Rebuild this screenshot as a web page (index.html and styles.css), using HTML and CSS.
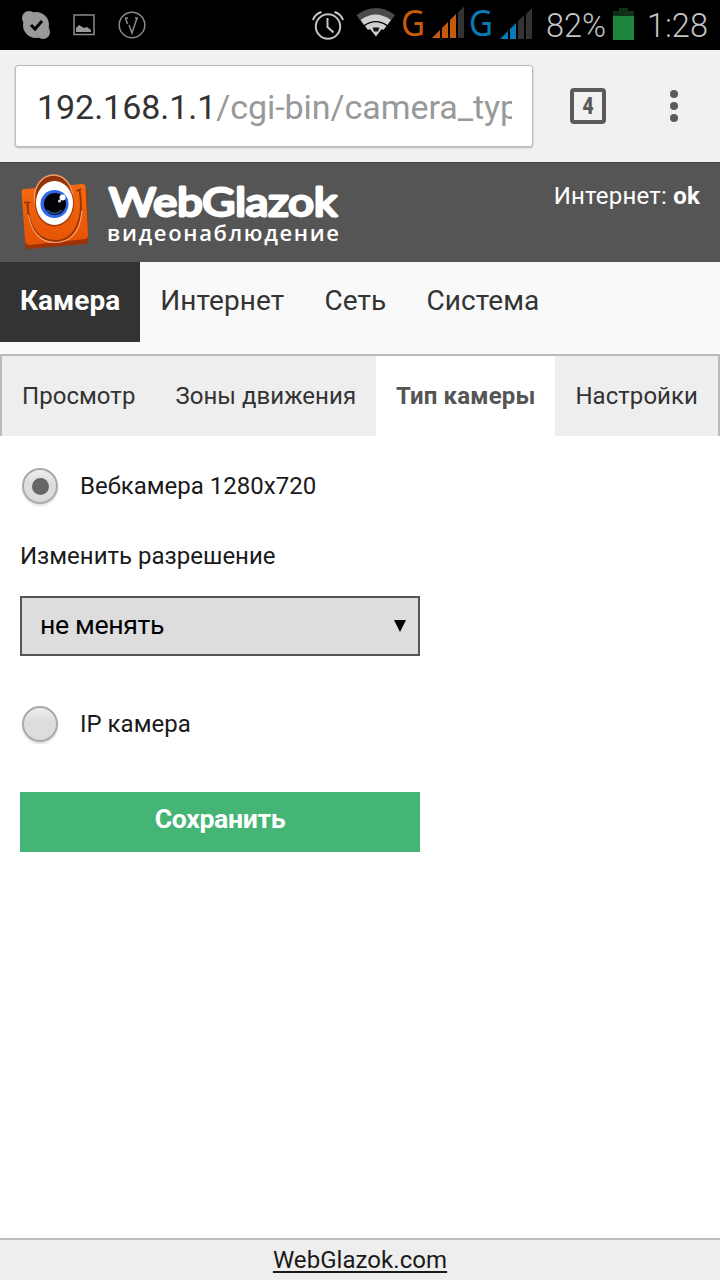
FILE: index.html
```html
<!DOCTYPE html>
<html lang="ru">
<head>
    <meta charset="UTF-8">
    <meta name="viewport" content="width=device-width, initial-scale=1.0">
    <title>WebGlazok</title>
    <link rel="stylesheet" href="styles.css">
</head>
<body>
    <div class="statusbar">
        <svg class="status-icons" width="540" height="50" viewBox="0 0 540 50">
            <!-- notifications -->
            <g fill="#999">
                <circle cx="36" cy="25" r="13"/>
                <circle cx="29" cy="18" r="7"/>
                <circle cx="43" cy="32" r="7"/>
            </g>
            <path d="M31 25l4 4 7-8" fill="none" stroke="#000" stroke-width="3"/>
            <rect x="74" y="15" width="20" height="19.500" fill="none" stroke="#8a8a8a" stroke-width="1.500"/>
            <path d="M76 32v-4l3-3 5 3 3-1 4 3v2z" fill="#999"/>
            <circle cx="132" cy="25" r="12.800" fill="none" stroke="#8a8a8a" stroke-width="1.500"/>
            <path d="M125 18h3M125.500 18l2 6M129 25l3 8 5-15M135 18h3" fill="none" stroke="#8a8a8a" stroke-width="1.500"/>
            <!-- alarm -->
            <g fill="none" stroke="#c4c4c4" stroke-width="2">
                <circle cx="328" cy="26.500" r="12.200"/>
                <path d="M327.500 18v9l6 5.500M313 20q2-6 8.500-8M343 20q-2-6-8.500-8"/>
            </g>
            <!-- wifi -->
            <path d="M356.500 15q19.500-14 38.500 0l-4 5.500q-15.500-11-31 0z" fill="#4a4a4a"/>
            <path d="M360.500 20q15-11 30.500 0l-3.500 5q-11.500-8-23.500 0z" fill="#d0d0d0"/>
            <path d="M365 26q10.500-7.500 21.500 0l-3 4q-7.500-5.500-15.500 0zM376 36.500l-8-10q7.500-4.500 15.500 0z" fill="#d0d0d0"/>
            <path d="M372.500 27.500h7l-1.500 4h-4z" fill="#111"/>
            <!-- two sims -->
            <text class="sim" x="401" y="36" textLength="24" lengthAdjust="spacingAndGlyphs" fill="#c85a0c">G</text>
            <path d="M432 38l8-8v8zM442 38V28l6-6v16zM450 38V20l6-6v24z" fill="#c85a0c"/>
            <path d="M458 38V12.500l6-6V38z" fill="#333"/>
            <text class="sim" x="469" y="36" textLength="24" lengthAdjust="spacingAndGlyphs" fill="#077bb5">G</text>
            <path d="M500 39l8-8v8zM510 39V29l6-6v16z" fill="#077bb5"/>
            <path d="M518 39V21l6-6v24zM526 39V14l6-6v31z" fill="#333"/>
        </svg>
        <span class="percent">82%</span>
        <svg class="battery" width="21" height="32" viewBox="0 0 21 32">
            <path d="M0 3h6V0h9v3h6v5H0z" fill="#0e3118"/>
            <path d="M0 8h21v24H0z" fill="#1e843c"/>
        </svg>
        <span class="clock">1:28</span>
    </div>

    <div class="toolbar">
        <div class="url"><div class="url-text">192.168.1.1<span>/cgi-bin/camera_type</span></div></div>
        <div class="tabs-count">4</div>
        <div class="menu"><i></i><i></i><i></i></div>
    </div>

    <header>
        <svg class="logo" width="340" height="96" viewBox="0 0 340 96">
            <defs>
                <linearGradient id="face" x1="0" y1="0" x2="0" y2="1">
                    <stop offset="0" stop-color="#f3690f"/>
                    <stop offset="1" stop-color="#e55306"/>
                </linearGradient>
            </defs>
            <path d="M22 29l3 54q0 3 4 3l56-5q3 0 3-4l-1-50z" fill="#9c3205"/>
            <path d="M21.500 29q0-3 3-3l58-5q3 0 3 3l2.500 48q0 3-3 4l-55 6q-4 0-5-4z" fill="url(#face)"/>
            <ellipse cx="53.500" cy="34" rx="19" ry="22" fill="#8e3408" stroke="#f59a68" stroke-width="1.500"/>
            <ellipse cx="54.500" cy="40" rx="19.500" ry="23.500" fill="#9c3908"/>
            <ellipse cx="54.500" cy="40" rx="18.500" ry="22" fill="#fff"/>
            <circle cx="54.500" cy="41" r="14" fill="#2f68e6"/>
            <circle cx="55" cy="41" r="11" fill="#020308"/>
            <path d="M47 47q8 7 15 0" fill="none" stroke="#24518c" stroke-width="1.500"/>
            <circle cx="62.500" cy="34.500" r="3" fill="#fff"/>
            <circle cx="59.500" cy="38" r="1.500" fill="#ddd"/>
            <path d="M24 39.500h6.500M76.500 28l5-2" stroke="#943306" stroke-width="1.500"/>
            <path d="M27.500 40C28 63 37 78 55 78S85 60 79.500 27" fill="none" stroke="#943306" stroke-width="1.800"/>
            <path d="M28.500 52C31 68 40 79.500 55 79.500S80 70 82 48" fill="none" stroke="#ffa168" stroke-width="1.200"/>
            <text class="logo-name" x="109" y="53" textLength="228" lengthAdjust="spacingAndGlyphs">WebGlazok</text>
            <text class="logo-sub" x="107" y="78" textLength="232">видеонаблюдение</text>
        </svg>
        <div class="state">Интернет: <b>ok</b></div>
    </header>

    <nav class="main-nav">
        <a class="active">Камера</a>
        <a>Интернет</a>
        <a>Сеть</a>
        <a>Система</a>
    </nav>
    <nav class="sub-nav">
        <a>Просмотр</a>
        <a>Зоны движения</a>
        <a class="active">Тип камеры</a>
        <a>Настройки</a>
    </nav>

    <form>
        <label class="radio-row"><span class="radio checked"></span>Вебкамера 1280x720</label>
        <div class="caption">Изменить разрешение</div>
        <div class="select">не менять
            <svg width="12" height="12" viewBox="0 0 12 12"><path d="M0 0h12L6 12z"/></svg>
        </div>
        <label class="radio-row ip"><span class="radio"></span>IP камера</label>
        <button type="button">Сохранить</button>
    </form>

    <footer><a>WebGlazok.com</a></footer>
</body>
</html>
```

FILE: styles.css
```css
* {
    box-sizing: border-box;
}
body {
    margin: 0;
    height: 1280px;
    display: flex;
    flex-direction: column;
    overflow: hidden;
    background: #fff;
    color: #1a1a1a;
    font-family: Roboto, "Noto Sans", sans-serif;
    font-size: 24px;
}
.statusbar {
    height: 50px;
    background: #000;
    color: #c4c4c4;
    display: flex;
    font-size: 32.5px;
    line-height: 53px;
    font-weight: 300;
    white-space: nowrap;
}
.status-icons {
    flex: none;
}
.sim {
    font-family: "Noto Sans", sans-serif;
    font-size: 36px;
    font-weight: 400;
}
.percent {
    width: 73px;
    padding-left: 6px;
}
.battery {
    margin-top: 8px;
}
.clock {
    margin-left: 13px;
}
.toolbar {
    height: 112px;
    background: #f1f1f1;
    display: flex;
    align-items: center;
    padding-left: 15px;
}
.url {
    width: 518px;
    height: 82px;
    margin-bottom: 1px;
    padding: 0 20px 0 21px;
    background: #fff;
    border: 1px solid #bbb;
    border-radius: 3px;
    box-shadow: 0 1px 2px rgba(0, 0, 0, 0.25);
}
.url-text {
    overflow: hidden;
    white-space: nowrap;
    font-size: 34px;
    line-height: 83px;
    letter-spacing: -0.05px;
    color: #333;
}
.url-text span {
    color: #999;
}
.tabs-count {
    width: 36px;
    height: 36px;
    margin-left: 37px;
    border: 4px solid #5a5a5a;
    border-radius: 4px;
    color: #5a5a5a;
    font: bold 23px/29px "Roboto Condensed", Roboto, sans-serif;
    text-align: center;
}
.menu {
    margin-left: 64px;
    display: flex;
    flex-direction: column;
    gap: 4px;
}
.menu i {
    width: 8px;
    height: 8px;
    border-radius: 50%;
    background: #5a5a5a;
}
header {
    height: 100px;
    background: #555;
    border-top: 1px solid #444;
    display: flex;
    justify-content: space-between;
    color: #fff;
}
.logo-name {
    font-family: Lato, sans-serif;
    font-weight: 400;
    font-size: 38px;
    fill: #fff;
    stroke: #fff;
    stroke-width: 2.8;
    stroke-linejoin: round;
}
.logo-sub {
    font-family: "Open Sans", sans-serif;
    font-weight: 600;
    font-size: 22px;
    fill: #fff;
}
.state {
    padding: 19px 20px 0 0;
    line-height: 28px;
    letter-spacing: 0.2px;
}
.main-nav {
    height: 92px;
    background: #f9f9f9;
    display: flex;
    font-size: 28px;
    line-height: 77px;
    letter-spacing: 0.1px;
    color: #333;
}
.main-nav a {
    height: 80px;
    padding: 0 20px;
}
.main-nav .active {
    background: #333;
    color: #fff;
    font-weight: bold;
    letter-spacing: 0;
}
.sub-nav {
    height: 82px;
    background: #eee;
    border: 2px solid #bbb;
    border-bottom: 0;
    display: flex;
    line-height: 80px;
    letter-spacing: 0.04px;
    color: #333;
}
.sub-nav a {
    padding: 0 20px;
    white-space: nowrap;
}
.sub-nav .active {
    background: #fff;
    color: #555;
    font-weight: bold;
    letter-spacing: 0.15px;
}
form {
    flex: 1;
    padding: 30px 20px 0;
}
.radio-row {
    display: flex;
    align-items: center;
    height: 40px;
}
.radio {
    width: 36px;
    height: 36px;
    margin: 0 22px 0 2px;
    border: 2px solid #aaa;
    border-radius: 50%;
    background: linear-gradient(#eee, #ddd 40%, #dcdcdc);
    box-shadow: 0 2px 2px rgba(0, 0, 0, 0.12);
    display: flex;
    align-items: center;
    justify-content: center;
}
.radio.checked::after {
    content: "";
    width: 17px;
    height: 17px;
    border-radius: 50%;
    background: #666;
}
.caption {
    margin-top: 30px;
    line-height: 40px;
}
.select {
    width: 400px;
    height: 60px;
    margin-top: 20px;
    padding: 0 12px 0 18px;
    border: 2px solid #555;
    background: #ddd;
    color: #000;
    font-size: 26.67px;
    line-height: 54px;
    letter-spacing: -0.35px;
    display: flex;
    justify-content: space-between;
}
.select svg {
    margin-top: 22px;
}
.ip {
    margin-top: 48px;
}
button {
    display: block;
    width: 400px;
    height: 60px;
    margin-top: 48px;
    padding: 0 0 6px;
    border: 0;
    background: #44b575;
    color: #fff;
    font-family: inherit;
    font-weight: bold;
    font-size: 26.67px;
    letter-spacing: -0.35px;
}
footer {
    height: 42px;
    background: #eee;
    border-top: 2px solid #bbb;
    text-align: center;
    line-height: 40px;
    letter-spacing: 0.05px;
}
footer a {
    text-decoration: underline;
    text-decoration-thickness: 2px;
    text-underline-offset: 3px;
}
```
